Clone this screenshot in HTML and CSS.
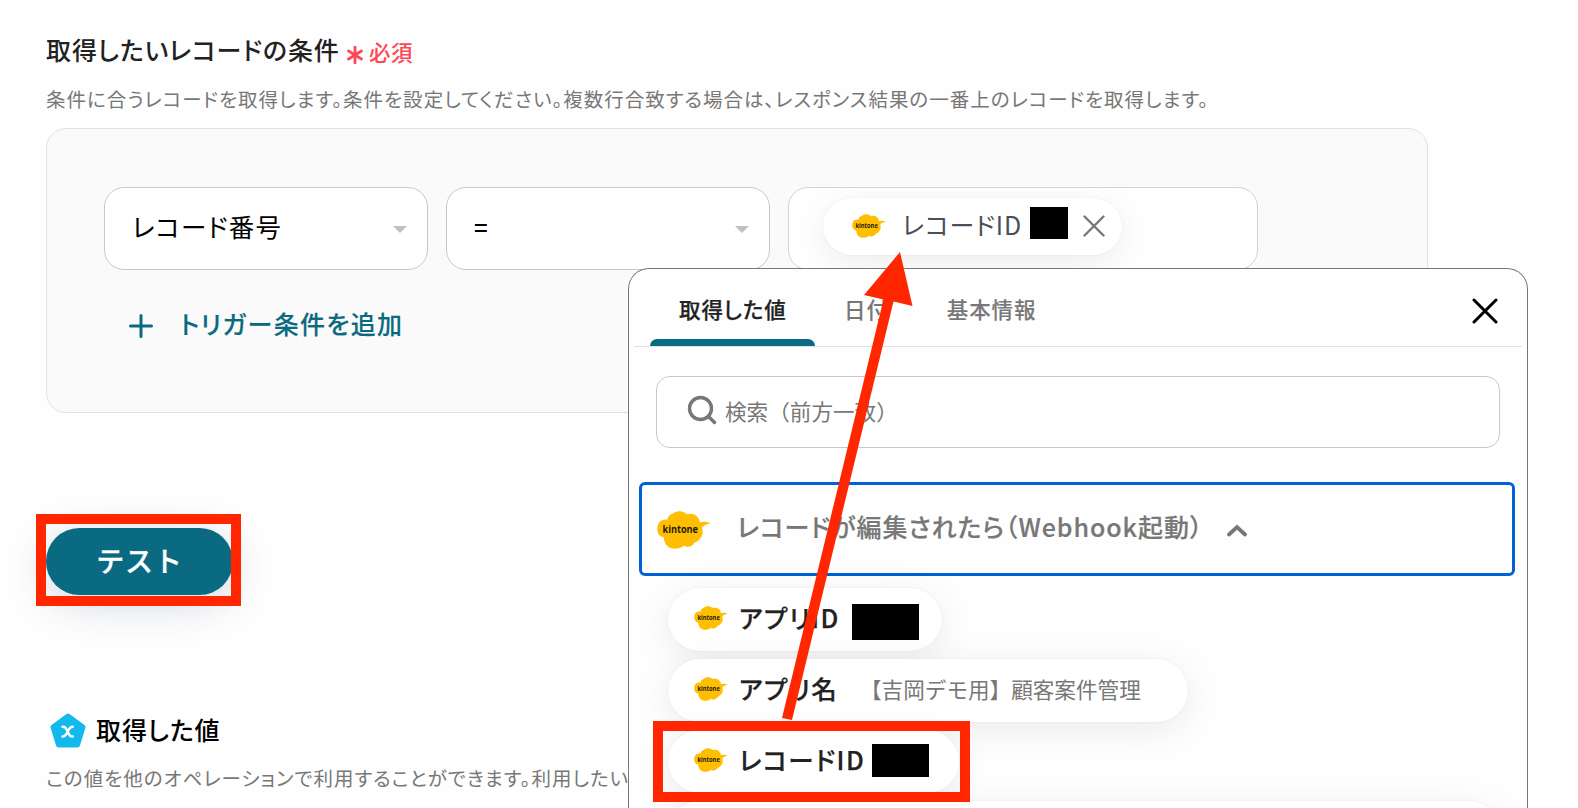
FILE: index.html
```html
<!DOCTYPE html>
<html lang="ja">
<head>
    <meta charset="UTF-8">
    <meta name="viewport" content="width=device-width, initial-scale=1.0">
    <title>取得したいレコードの条件</title>
    <link rel="stylesheet" href="styles.css">
</head>
<body>

<!-- Shared kintone logo -->
<svg class="symbols" width="0" height="0">
    <symbol id="kintone" viewBox="0 0 54 38">
        <path fill="#ffbf00" d="M3.500 10C5.500 8.500 8 8.500 10.500 8.500C11 5 13 3 15.500 3C18.500 -0.500 26 -1 29.500 3.200C35 1.500 42 4 43 11.500C47 10 50 11 54 12.300C51 13 47.500 14 45 16C46 21 46 25 43 27.500C41.500 29.500 40 31 37.500 31.500C35.500 36 30 37 27 34.500C22 39 13 39 9.500 34C7.500 31.500 6.500 29 7 26.500C-1 25 -1.500 15 3.500 10Z"/>
        <text class="logo-text" x="5.500" y="21.800" textLength="35.500" lengthAdjust="spacingAndGlyphs">kintone</text>
    </symbol>
</svg>

<main class="page">
    <div class="field-title">
        <h2>取得したいレコードの条件</h2>
        <svg class="asterisk" width="16" height="18" viewBox="0 0 16 18"><path d="M8 1v16M1.500 5l13 8M14.500 5l-13 8"/></svg>
        <span class="required">必須</span>
    </div>
    <p class="description">条件に合うレコードを取得します。条件を設定してください。複数行合致する場合は、レスポンス結果の一番上のレコードを取得します。</p>

    <section class="conditions">
        <div class="condition-row">
            <div class="select"><span class="select-text">レコード番号</span><span class="caret"></span></div>
            <div class="select"><span class="select-text operator">=</span><span class="caret"></span></div>
            <div class="value-input">
                <div class="value-chip">
                    <svg class="logo-small" width="34" height="24"><use href="#kintone"/></svg>
                    <span class="value-name">レコードID</span>
                    <span class="mask mask-input"></span>
                    <svg class="remove" width="22" height="22" viewBox="0 0 22 22"><path d="M1.500 1.500l19 19M20.500 1.500l-19 19"/></svg>
                </div>
            </div>
        </div>
        <div class="add-condition">
            <svg width="24" height="24" viewBox="0 0 24 24"><path d="M12 1.500v21M1.500 12h21"/></svg>
            <span>トリガー条件を追加</span>
        </div>
    </section>

    <button class="test-button" type="button">テスト</button>

    <div class="output-title">
        <svg width="36" height="35" viewBox="0 0 36 35">
            <path class="pentagon" d="M18 3L33 14L27.500 32H8.500L3 14Z"/>
            <path class="pentagon-x" d="M12.500 13.700c2.500 0 3.300 1 5.200 5s2.500 4.800 5 4.800M22.800 13.700c-2 0-3.200 1-5.100 4.800s-2.700 5-5.200 5"/>
        </svg>
        <h3>取得した値</h3>
    </div>
    <p class="description output-note">この値を他のオペレーションで利用することができます。利用したい</p>
</main>

<!-- Value picker -->
<div class="picker">
    <div class="picker-header">
        <div class="tab active">取得した値</div>
        <div class="tab">日付</div>
        <div class="tab">基本情報</div>
        <svg class="close" width="26" height="26" viewBox="0 0 26 26"><path d="M2 2l22 22M24 2L2 24"/></svg>
    </div>
    <div class="search">
        <svg width="30" height="30" viewBox="0 0 30 30"><circle cx="13.500" cy="13.500" r="11"/><path d="M21.500 21.500l6 6"/></svg>
        <span>検索（前方一致）</span>
    </div>
    <div class="group">
        <svg class="logo-large" width="54" height="38"><use href="#kintone"/></svg>
        <span class="group-name">レコードが編集されたら（Webhook起動）</span>
        <svg class="chevron" width="20" height="13" viewBox="0 0 20 13"><path d="M2 10.500l8-7.500 8 7.500"/></svg>
    </div>
    <div class="items">
        <div class="item item-app-id">
            <svg width="34" height="24"><use href="#kintone"/></svg>
            <span class="item-name">アプリID</span>
            <span class="mask mask-app"></span>
        </div>
        <div class="item item-app-name">
            <svg width="34" height="24"><use href="#kintone"/></svg>
            <span class="item-name">アプリ名</span>
            <span class="item-value">【吉岡デモ用】顧客案件管理</span>
        </div>
        <div class="item item-record-id">
            <svg width="34" height="24"><use href="#kintone"/></svg>
            <span class="item-name">レコードID</span>
            <span class="mask mask-record"></span>
        </div>
        <div class="item item-next"></div>
    </div>
</div>

<!-- Red guide marks over the screen -->
<div class="mark mark-test"></div>
<div class="mark mark-record"></div>
<svg class="arrow" width="1578" height="808" viewBox="0 0 1578 808">
    <path d="M900 252L912.500 306L893.500 301.500L792 720L782 718L883.500 299.500L864 295Z"/>
</svg>

</body>
</html>
```
FILE: styles.css
```css
* {
    box-sizing: border-box;
}

body {
    margin: 0;
    width: 1578px;
    height: 808px;
    overflow: hidden;
    position: relative;
    background-color: #fefefe;
    color: #222;
    font-family: "Noto Sans CJK JP", sans-serif;
    font-feature-settings: "palt";
    white-space: nowrap;
}

h2, h3, p {
    margin: 0;
}

svg {
    flex: none;
    fill: none;
    stroke-linecap: round;
}

.symbols {
    display: none;
}

.logo-text {
    fill: #221a10;
    font-family: "Open Sans", sans-serif;
    font-size: 10.8px;
    font-weight: 700;
    -webkit-text-stroke: 0;
}

.page {
    height: 808px;
    padding: 30px 46px 0;
    overflow: hidden;
}

/* Title and description */
.field-title {
    display: flex;
    align-items: center;
    height: 38px;
}

.field-title h2 {
    width: 301px;
    font-size: 25px;
    font-weight: 500;
    letter-spacing: 0.9px;
}

.asterisk {
    margin-top: 12px;
    stroke: #ff4757;
    stroke-width: 2.8;
}

.required {
    margin: 4px 0 0 6px;
    color: #ff4757;
    font-size: 21.5px;
    font-weight: 500;
    letter-spacing: 0.6px;
}

.description {
    height: 30px;
    margin-top: 16px;
    color: #777;
    font-size: 19.5px;
    line-height: 30px;
    letter-spacing: 1.02px;
}

/* Condition panel */
.conditions {
    width: 1382px;
    height: 285px;
    margin-top: 14px;
    padding: 58px 57px 0;
    background-color: #fafafa;
    border: 1px solid #e1e1e1;
    border-radius: 20px;
}

.condition-row {
    display: flex;
    gap: 18px;
}

.select {
    display: flex;
    align-items: center;
    justify-content: space-between;
    width: 324px;
    height: 83px;
    padding: 0 20px 7px 27px;
    background-color: #fff;
    border: 1px solid #c8c8c8;
    border-radius: 20px;
    color: #000;
    font-size: 25.5px;
    letter-spacing: 1.2px;
}

.operator {
    margin-top: 3px;
    font-size: 24px;
    font-weight: 500;
}

.caret {
    margin-top: 8px;
    border: 7px solid transparent;
    border-top-color: #c0c0c0;
    border-bottom-width: 0;
}

.value-input {
    width: 470px;
    height: 83px;
    padding: 10px 34px;
    background-color: #fff;
    border: 1px solid #ced2dc;
    border-radius: 20px;
    overflow: hidden;
}

.value-chip {
    display: flex;
    align-items: center;
    width: 299px;
    height: 57px;
    padding: 0 0 2px 29px;
    background-color: #fff;
    border-radius: 29px;
    box-shadow: 0 8px 36px rgba(0, 0, 0, 0.08), 0 0 2px rgba(0, 0, 0, 0.08);
}

.value-name {
    width: 128px;
    margin: -4px 0 0 16px;
    color: #4a4f58;
    font-size: 25px;
    letter-spacing: 0.9px;
}

.mask {
    flex: none;
    background-color: #000;
}

.mask-input {
    width: 38px;
    height: 32px;
    margin-top: -5px;
}

.remove {
    margin-left: 14.5px;
    stroke: #777;
    stroke-width: 2.4;
}

.add-condition {
    display: flex;
    align-items: center;
    gap: 27px;
    margin: 35px 0 0 25px;
    color: #0a6a82;
    font-size: 25px;
    font-weight: 500;
    letter-spacing: 1.35px;
    -webkit-text-stroke: 0.15px;
}

.add-condition svg {
    margin-top: 6px;
    stroke: #0a6a82;
    stroke-width: 3;
}

/* Test button */
.test-button {
    display: block;
    width: 187px;
    height: 67px;
    margin-top: 115px;
    padding: 0 0 4px;
    background-color: #0a6a82;
    border: none;
    border-radius: 34px;
    box-shadow: 0 8px 40px rgba(30, 50, 80, 0.2);
    color: #fff;
    font: 500 28px "Noto Sans CJK JP", sans-serif;
    letter-spacing: 0.8px;
    -webkit-text-stroke: 0.3px;
}

/* Output section */
.output-title {
    display: flex;
    align-items: center;
    gap: 10px;
    height: 38px;
    margin: 116px 0 0 4px;
}

.output-title h3 {
    margin-top: -2px;
    color: #000;
    font-size: 25px;
    font-weight: 500;
    letter-spacing: 0.9px;
}

.output-note {
    margin-top: 14px;
}

.pentagon {
    fill: #14b9eb;
    stroke: #14b9eb;
    stroke-width: 5;
    stroke-linejoin: round;
}

.pentagon-x {
    stroke: #fff;
    stroke-width: 2.4;
}

/* Value picker */
.picker {
    position: absolute;
    left: 628px;
    top: 268px;
    width: 900px;
    height: 540px;
    padding: 0 5px;
    overflow: hidden;
    background-color: #fefefe;
    border: 1px solid #777;
    border-bottom: none;
    border-radius: 21px 21px 0 0;
}

.picker-header {
    display: flex;
    height: 78px;
    padding-left: 16px;
    border-bottom: 1px solid #e1e1e1;
    color: #777;
    font-size: 21.5px;
    font-weight: 500;
    letter-spacing: 0.9px;
    -webkit-text-stroke: 0.1px;
}

.tab {
    height: 77px;
    padding: 0 29px;
    line-height: 79px;
}

.tab.active {
    position: relative;
    width: 165px;
    color: #222;
    -webkit-text-stroke: 0.25px;
}

.tab.active::after {
    content: "";
    position: absolute;
    left: 0;
    bottom: 0;
    width: 165px;
    height: 7px;
    background-color: #0a6a82;
    border-radius: 7px 7px 0 0;
}

.close {
    margin: 29px 24px 0 auto;
    stroke: #000;
    stroke-width: 3;
}

.search {
    display: flex;
    align-items: center;
    gap: 8px;
    width: 844px;
    height: 72px;
    margin: 29px 0 0 22px;
    padding: 0 0 3px 30px;
    background-color: #fff;
    border: 1px solid #c8c8c8;
    border-radius: 14px;
    color: #777;
    font-size: 21.6px;
    font-feature-settings: normal;
}

.search svg {
    margin-bottom: 1px;
    stroke: #777;
    stroke-width: 3.4;
}

.group {
    display: flex;
    align-items: center;
    width: 876px;
    height: 94px;
    margin: 34px 0 0 5px;
    padding-left: 15px;
    border: 3.5px solid #0062d6;
    border-radius: 6px;
    color: #777;
    font-size: 25px;
    font-weight: 500;
    -webkit-text-stroke: 0.2px;
}

.logo-large {
    margin-top: 2px;
}

.group-name {
    width: 490px;
    margin: -7px 0 0 26px;
    letter-spacing: 0.95px;
}

.chevron {
    margin-top: 2px;
    stroke: #777;
    stroke-width: 3.8;
}

.items {
    display: grid;
    gap: 8px;
    margin: 12px 0 0 34px;
}

.item {
    display: flex;
    align-items: center;
    height: 63px;
    padding: 0 0 3px 26px;
    background-color: #fff;
    border-radius: 32px;
    box-shadow: 0 8px 36px rgba(0, 0, 0, 0.08), 0 0 2px rgba(0, 0, 0, 0.08);
}

.item svg {
    margin-bottom: 0;
}

.item-name {
    width: 98px;
    margin: -3px 0 0 11px;
    font-size: 25.5px;
    font-weight: 500;
    letter-spacing: 1.4px;
    -webkit-text-stroke: 0.25px;
}

.item-value {
    margin: -2px 0 0 23px;
    color: #777;
    font-size: 21.6px;
    font-feature-settings: normal;
}

.item-app-id {
    width: 274px;
}

.item-app-name {
    width: 520px;
}

.item-record-id {
    width: 291px;
}

.item-record-id .item-name {
    width: 124px;
}

.item-next {
    width: 832px;
}

.mask-app {
    width: 67px;
    height: 36px;
    margin: 7px 0 0 15px;
}

.mask-record {
    width: 57px;
    height: 33px;
    margin-left: 9px;
}

/* Guide marks */
.mark {
    position: absolute;
    border: 10px solid #ff2600;
}

.mark-test {
    left: 36px;
    top: 514px;
    width: 205px;
    height: 92px;
}

.mark-record {
    left: 653px;
    top: 721px;
    width: 317px;
    height: 81px;
}

.arrow {
    position: absolute;
    left: 0;
    top: 0;
    fill: #ff2600;
}
```
